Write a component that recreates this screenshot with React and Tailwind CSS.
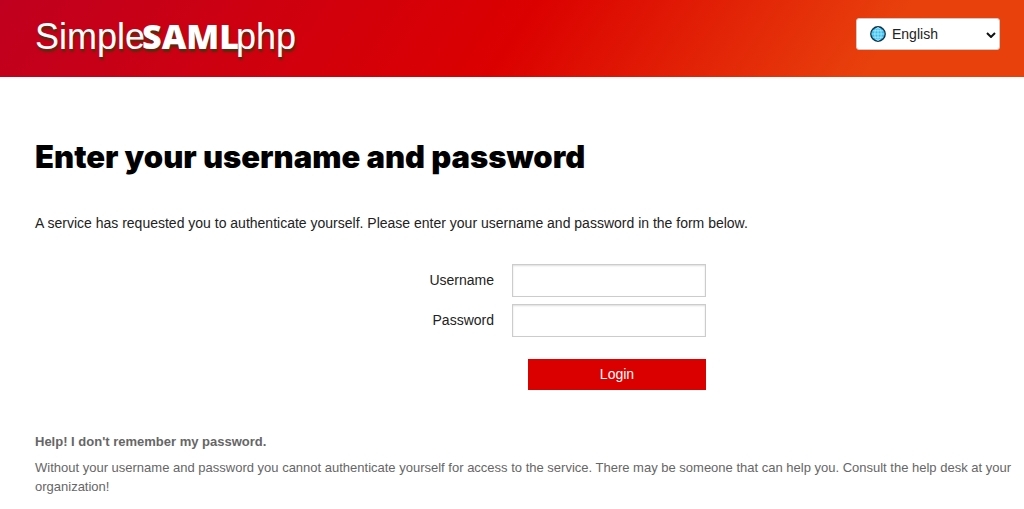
const languages = ["English"];

function GlobeIcon() {
  return (
    <svg viewBox="0 0 16 16" className="h-4 w-4" aria-hidden="true">
      <circle cx="8" cy="8" r="7.2" fill="#35bdf0" stroke="#123344" strokeWidth="1.4" />
      <g fill="none" stroke="#b5ecff" strokeWidth="0.8">
        <ellipse cx="8" cy="8" rx="3.2" ry="6.4" />
        <path d="M8 1.6v12.8M1.6 8h12.8M2.7 4.8h10.6M2.7 11.2h10.6" />
      </g>
    </svg>
  );
}

function Header() {
  return (
    <header className="flex items-start justify-between bg-[linear-gradient(123deg,#c0001f_0%,#db0000_50%,#e8410c_85%)] pr-6 pb-4 pl-[35px]">
      <a
        href="#"
        className="mt-3 flex items-baseline text-[36px] leading-12 text-white [text-shadow:1px_3px_2px_#5a2a0c]"
      >
        <span>Simple</span>
        <strong className="-mx-[3px] font-['Open_Sans','Noto_Sans',sans-serif] text-[34px] leading-12 font-extrabold">
          SAML
        </strong>
        <span>php</span>
      </a>
      <div className="relative mt-[18px]">
        <span className="pointer-events-none absolute top-2 left-3.5">
          <GlobeIcon />
        </span>
        <select
          aria-label="Language"
          className="h-8 w-36 appearance-none rounded-[3px] border border-[#ccc] bg-white pl-[35px] text-[14px] text-[#222]"
        >
          {languages.map((l) => (
            <option key={l}>{l}</option>
          ))}
        </select>
        <svg viewBox="0 0 10 6" className="pointer-events-none absolute top-3.5 right-1 h-1.5 w-2.5" aria-hidden="true">
          <path d="M1 1l4 4 4-4" fill="none" stroke="#111" strokeWidth="2" />
        </svg>
      </div>
    </header>
  );
}

function Field({ id, label, type }) {
  return (
    <div className="flex items-center justify-end gap-[18px]">
      <label htmlFor={id}>{label}</label>
      <input
        id={id}
        type={type}
        className="h-[33px] w-[194px] border border-[#ccc] bg-white px-2 shadow-[inset_0_1px_2px_#ddd]"
      />
    </div>
  );
}

export default function App() {
  return (
    <div className="bg-white font-['Liberation_Sans',Arial,sans-serif] text-[14px] text-[#222]">
      <Header />
      <main className="px-[35px] pt-[60px]">
        <h1 className="font-['Inter',sans-serif] text-[31px] leading-10 font-black text-black">
          Enter your username and password
        </h1>
        <p className="mt-9 leading-5">
          A service has requested you to authenticate yourself. Please enter your username and password in the form
          below.
        </p>
        <form className="mx-auto mt-[31px] flex w-[388px] flex-col gap-[7px]" onSubmit={(e) => e.preventDefault()}>
          <Field id="username" label="Username" type="text" />
          <Field id="password" label="Password" type="password" />
          <button type="submit" className="mt-[15px] h-[31px] w-[178px] self-end bg-[#db0000] text-white">
            Login
          </button>
        </form>
        <section className="-mr-6 mt-[42px] text-[13px] text-[#666]">
          <h2 className="leading-5 font-bold">Help! I don't remember my password.</h2>
          <p className="mt-1.5 leading-[19px]">
            Without your username and password you cannot authenticate yourself for access to the service. There may be
            someone that can help you. Consult the help desk at your organization!
          </p>
        </section>
      </main>
    </div>
  );
}
